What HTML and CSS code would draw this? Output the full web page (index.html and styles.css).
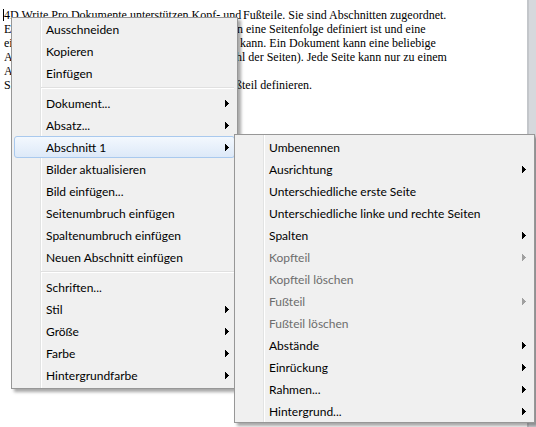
FILE: index.html
```html
<!DOCTYPE html>
<html lang="de">
<head>
<meta charset="utf-8">
<title>4D Write Pro – Kontextmenü</title>
<link rel="stylesheet" href="styles.css">
</head>
<body>
<div class="window">
  <div class="doc">
    <p class="ln"><span class="caret"></span><span class="lead l1">4D Write Pro Dokumente unterstützen Kopf- und </span>Fußteile. Sie sind Abschnitten zugeordnet.</p>
    <p class="ln"><span class="lead l2">Ein Abschnitt ist ein Teil eines Dokuments, in denen</span>n eine Seitenfolge definiert ist und eine</p>
    <p class="ln"><span class="lead l3">eigene Kopf- und Fußzeile besitzen </span>kann. Ein Dokument kann eine beliebige</p>
    <p class="ln"><span class="lead l4">Anzahl an Abschnitten enthalten (max. Anza</span>hl der Seiten). Jede Seite kann nur zu einem</p>
    <p class="ln">Abschnitt gehören.</p>
    <p class="ln"><span class="lead l6">Sie können für jeden Abschnitt Kopf- und Fu</span>ßteil definieren.</p>
  </div>
  <div class="rail"></div>
</div>

<div class="menu main">
  <div class="item">Ausschneiden</div>
  <div class="item">Kopieren</div>
  <div class="item">Einfügen</div>
  <div class="sep"></div>
  <div class="item">Dokument...<svg class="arrow" width="4" height="7" viewBox="0 0 4 7"><path d="M0 0h1v7H0zM1 1h1v5H1zM2 2h1v3H2zM3 3h1v1H3z"/></svg></div>
  <div class="item">Absatz...<svg class="arrow" width="4" height="7" viewBox="0 0 4 7"><path d="M0 0h1v7H0zM1 1h1v5H1zM2 2h1v3H2zM3 3h1v1H3z"/></svg></div>
  <div class="item hl">Abschnitt 1<svg class="arrow" width="4" height="7" viewBox="0 0 4 7"><path d="M0 0h1v7H0zM1 1h1v5H1zM2 2h1v3H2zM3 3h1v1H3z"/></svg></div>
  <div class="item">Bilder aktualisieren</div>
  <div class="item">Bild einfügen...</div>
  <div class="item">Seitenumbruch einfügen</div>
  <div class="item">Spaltenumbruch einfügen</div>
  <div class="item">Neuen Abschnitt einfügen</div>
  <div class="sep"></div>
  <div class="item">Schriften...</div>
  <div class="item">Stil<svg class="arrow" width="4" height="7" viewBox="0 0 4 7"><path d="M0 0h1v7H0zM1 1h1v5H1zM2 2h1v3H2zM3 3h1v1H3z"/></svg></div>
  <div class="item">Größe<svg class="arrow" width="4" height="7" viewBox="0 0 4 7"><path d="M0 0h1v7H0zM1 1h1v5H1zM2 2h1v3H2zM3 3h1v1H3z"/></svg></div>
  <div class="item">Farbe<svg class="arrow" width="4" height="7" viewBox="0 0 4 7"><path d="M0 0h1v7H0zM1 1h1v5H1zM2 2h1v3H2zM3 3h1v1H3z"/></svg></div>
  <div class="item">Hintergrundfarbe<svg class="arrow" width="4" height="7" viewBox="0 0 4 7"><path d="M0 0h1v7H0zM1 1h1v5H1zM2 2h1v3H2zM3 3h1v1H3z"/></svg></div>
</div>

<div class="menu sub">
  <div class="item">Umbenennen</div>
  <div class="item">Ausrichtung<svg class="arrow" width="4" height="7" viewBox="0 0 4 7"><path d="M0 0h1v7H0zM1 1h1v5H1zM2 2h1v3H2zM3 3h1v1H3z"/></svg></div>
  <div class="item">Unterschiedliche erste Seite</div>
  <div class="item">Unterschiedliche linke und rechte Seiten</div>
  <div class="item">Spalten<svg class="arrow" width="4" height="7" viewBox="0 0 4 7"><path d="M0 0h1v7H0zM1 1h1v5H1zM2 2h1v3H2zM3 3h1v1H3z"/></svg></div>
  <div class="item off">Kopfteil<svg class="arrow" width="4" height="7" viewBox="0 0 4 7"><path d="M0 0h1v7H0zM1 1h1v5H1zM2 2h1v3H2zM3 3h1v1H3z"/></svg></div>
  <div class="item off">Kopfteil löschen</div>
  <div class="item off">Fußteil<svg class="arrow" width="4" height="7" viewBox="0 0 4 7"><path d="M0 0h1v7H0zM1 1h1v5H1zM2 2h1v3H2zM3 3h1v1H3z"/></svg></div>
  <div class="item off">Fußteil löschen</div>
  <div class="item">Abstände<svg class="arrow" width="4" height="7" viewBox="0 0 4 7"><path d="M0 0h1v7H0zM1 1h1v5H1zM2 2h1v3H2zM3 3h1v1H3z"/></svg></div>
  <div class="item">Einrückung<svg class="arrow" width="4" height="7" viewBox="0 0 4 7"><path d="M0 0h1v7H0zM1 1h1v5H1zM2 2h1v3H2zM3 3h1v1H3z"/></svg></div>
  <div class="item">Rahmen...<svg class="arrow" width="4" height="7" viewBox="0 0 4 7"><path d="M0 0h1v7H0zM1 1h1v5H1zM2 2h1v3H2zM3 3h1v1H3z"/></svg></div>
  <div class="item">Hintergrund...<svg class="arrow" width="4" height="7" viewBox="0 0 4 7"><path d="M0 0h1v7H0zM1 1h1v5H1zM2 2h1v3H2zM3 3h1v1H3z"/></svg></div>
</div>
</body>
</html>
```
FILE: styles.css
```css
* { box-sizing: border-box; }
html, body { margin: 0; height: 100%; }
body { background: #fff; overflow: hidden; }

.window { display: flex; height: 100vh; }
.doc {
  flex: 1;
  padding: 8px 0 0 4px;
  font-family: "Liberation Serif", "Times New Roman", serif;
  font-size: 12px;
  line-height: 14px;
  color: #000;
}
.ln { margin: 0; white-space: nowrap; height: 14px; }
.caret {
  display: inline-block;
  width: 1px;
  height: 12px;
  margin-left: -1px;
  background: #000;
  vertical-align: -2px;
}
.lead {
  display: inline-block;
  overflow: hidden;
  white-space: nowrap;
  vertical-align: top;
  height: 14px;
}
.l1 { width: 239px; }
.l2 { width: 233px; }
.l3 { width: 236px; }
.l4 { width: 232px; }
.l6 { width: 232px; }

.rail {
  width: 9px;
  background: #d5d8dc;
  border-left: 2px solid #c3c6ca;
}

.menu {
  position: absolute;
  border: 1px solid #979797;
  background: linear-gradient(to right, #f0f0f0 28px, #e2e3e3 28px 29px, #ffffff 29px 30px, #f0f0f0 30px);
  box-shadow: 3px 3px 3px rgba(0, 0, 0, 0.35);
  font-family: Lato, "Liberation Sans", sans-serif;
  font-size: 12px;
  color: #000;
}
.main { left: 11px; top: 17px; width: 227px; padding: 0 0 2px; }
.sub { left: 234px; top: 134px; width: 301px; padding: 1px 0 0; }

.item {
  height: 22px;
  margin: 0 2px;
  padding: 0 5px 0 31px;
  border: 1px solid transparent;
  border-radius: 3px;
  display: flex;
  align-items: center;
  justify-content: space-between;
  white-space: nowrap;
}
.item.hl {
  border-color: #a9c9ee;
  background: linear-gradient(#f3f8fe, #dde9f8);
}
.item.off { color: #6d6d6d; }
.arrow { display: block; fill: #000; shape-rendering: crispEdges; }
.item.off .arrow { fill: #a0a0a0; }

.sep {
  height: 8px;
  margin: 0 3px 0 29px;
  background: linear-gradient(to bottom, transparent 3px, #e0e0e0 3px 4px, #ffffff 4px 5px, transparent 5px);
}
```
